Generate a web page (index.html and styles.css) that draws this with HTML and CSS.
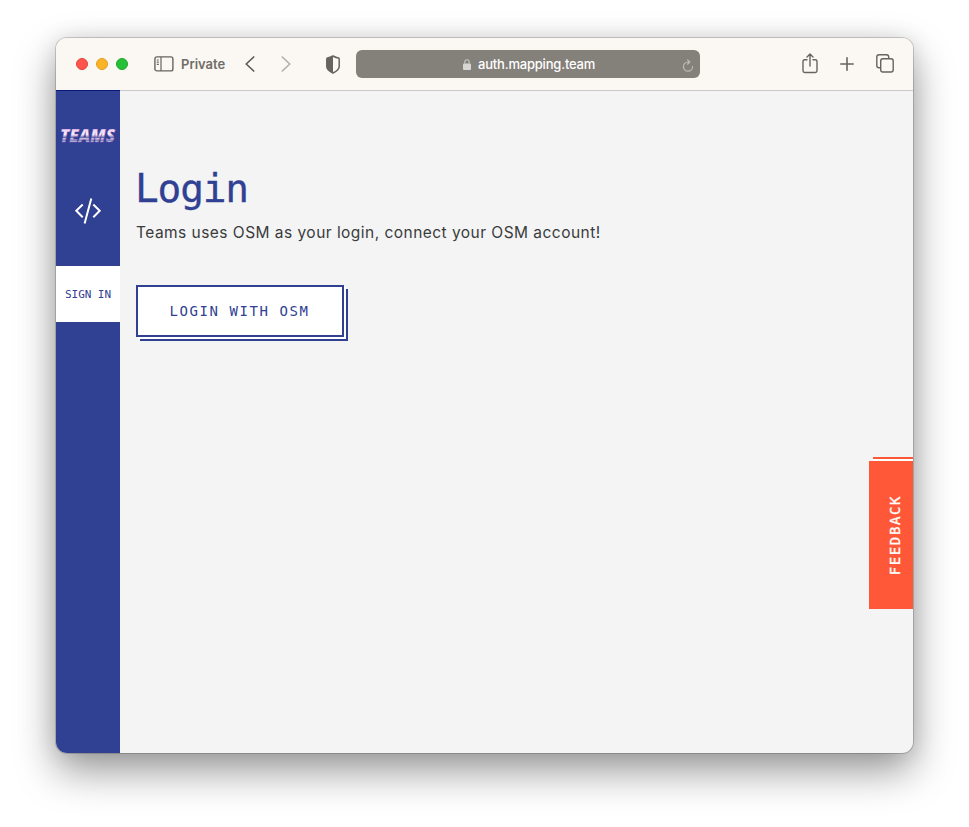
FILE: index.html
```html
<!DOCTYPE html>
<html lang="en">
<head>
<meta charset="utf-8">
<title>Teams – Login</title>
<link rel="stylesheet" href="styles.css">
</head>
<body>
<div class="window">
  <header class="toolbar">
    <div class="lights"><i class="red"></i><i class="yellow"></i><i class="green"></i></div>
    <svg class="panel-icon" width="20" height="16" viewBox="0 0 20 16" fill="none" stroke="#67645f" stroke-width="1.4"><rect x=".9" y=".9" width="18" height="14" rx="2"/><path d="M7 1v14M2.8 4h2M2.8 6.2h2M2.8 8.4h2" stroke-width="1.2"/></svg>
    <span class="private">Private</span>
    <svg class="back" width="10" height="16" viewBox="0 0 10 16" fill="none" stroke="#5e5b57" stroke-width="1.7" stroke-linecap="round" stroke-linejoin="round"><path d="M8.7 1 1.2 8l7.5 7"/></svg>
    <svg class="forward" width="10" height="16" viewBox="0 0 10 16" fill="none" stroke="#b4b1ac" stroke-width="1.7" stroke-linecap="round" stroke-linejoin="round"><path d="m1.3 1 7.5 7-7.5 7"/></svg>
    <svg class="shield" width="14" height="19" viewBox="0 0 14 19"><path d="M7 1Q10 2.8 12.5 3.1 13.2 3.2 13.2 4V11.5C13.2 15 9.5 16.8 7 18 4.500 16.800.8 15 .8 11.500V4Q.8 3.200 1.500 3.100 4 2.800 7 1Z" fill="none" stroke="#67645f" stroke-width="1.5"/><path d="M7 1V18C4.500 16.800.8 15 .8 11.500V4Q.8 3.200 1.500 3.100 4 2.800 7 1Z" fill="#67645f"/></svg>
    <div class="address">
      <svg class="lock" width="8" height="11" viewBox="0 0 8 11"><rect y="4.500" width="8" height="6.500" rx="1" fill="#d9d7d4"/><path d="M1.800 5V3a2.200 2.200 0 0 1 4.400 0v2" fill="none" stroke="#c9c7c3" stroke-width="1.100"/></svg>
      <span>auth.mapping.team</span>
      <svg class="reload" width="12" height="13" viewBox="0 0 12 13" fill="none" stroke="#bdbab6" stroke-width="1.200" stroke-linecap="round" stroke-linejoin="round"><path d="M7.500 3H6A4.600 4.600 0 1 0 10.600 7.600M5.500.9l2.300 2.100-2.300 2.200"/></svg>
    </div>
    <svg class="share" width="16" height="21" viewBox="0 0 16 21" fill="none" stroke="#67645f" stroke-width="1.400" stroke-linecap="round" stroke-linejoin="round"><path d="M5 6.800H2.700Q1 6.800 1 8.500v9.300q0 1.700 1.700 1.700h10.600q1.700 0 1.700-1.700V8.500q0-1.700-1.700-1.700H11M8 13V1.200M5 4l3-3 3 3"/></svg>
    <svg class="plus" width="14" height="14" viewBox="0 0 14 14" stroke="#67645f" stroke-width="1.600" stroke-linecap="round"><path d="M7 .8v12.400M.8 7h12.400"/></svg>
    <svg class="tabs" width="18" height="19" viewBox="0 0 18 19" fill="none" stroke="#67645f" stroke-width="1.400"><path d="M4.500 13.700H3q-2.200 0-2.200-2.200V3Q.8.800 3 .800h7.500q2.200 0 2.200 2.200v1.700"/><rect x="4.700" y="4.800" width="12.500" height="13.200" rx="2.200"/></svg>
  </header>
  <div class="content">
    <nav class="sidebar">
      <div class="logo">
        <svg width="60" height="24" viewBox="0 0 60 24">
          <defs><linearGradient id="chrome" x1="0" y1="0" x2="0" y2="1"><stop offset=".2" stop-color="#e6cdec"/><stop offset=".45" stop-color="#f8f0fb"/><stop offset=".55" stop-color="#a9a1ca"/><stop offset=".68" stop-color="#d9c9e5"/><stop offset=".8" stop-color="#8f9fc8"/></linearGradient></defs>
          <text x="2" y="18" class="logo-text" textLength="55" lengthAdjust="spacingAndGlyphs">TEAMS</text>
          <path d="M0 13.300h60M0 16.100h60" stroke="#304194" stroke-width=".7"/>
        </svg>
      </div>
      <svg class="code" width="28" height="28" viewBox="0 0 28 28" fill="none" stroke="#fff" stroke-width="2"><path d="M8.700 7.500 2.300 13.800l6.400 6.400M19.300 7.500l6.400 6.300-6.400 6.400M17.300 1.500 10.600 26.500"/></svg>
      <a class="signin">SIGN IN</a>
    </nav>
    <main>
      <h1>Login</h1>
      <p>Teams uses OSM as your login, connect your OSM account!</p>
      <button class="login">LOGIN WITH OSM</button>
    </main>
    <button class="feedback"><span>FEEDBACK</span></button>
  </div>
</div>
</body>
</html>
```
FILE: styles.css
```css
* { box-sizing: border-box; }
body {
  margin: 0;
  height: 827px;
  padding: 38px 56px;
  overflow: hidden;
  background: #fff;
  font-family: Inter, sans-serif;
}
.window {
  width: 857px;
  height: 715px;
  display: flex;
  flex-direction: column;
  overflow: hidden;
  border-radius: 11px;
  background: #f4f4f4;
  box-shadow: 0 0 0 1px rgba(0,0,0,.17), 0 18px 40px rgba(0,0,0,.4), 0 0 22px rgba(0,0,0,.1);
}
.toolbar {
  height: 53px;
  flex: none;
  display: flex;
  align-items: center;
  padding-left: 20px;
  background: #fbf7f2;
  border-bottom: 1px solid #c9c9c8;
}
.toolbar svg { flex: none; }
.lights { display: flex; gap: 8px; }
.lights i { width: 12px; height: 12px; border-radius: 50%; border: 1px solid #e1443e; background: #ff554e; }
.lights .yellow { border-color: #e29e25; background: #fdb327; }
.lights .green { border-color: #1da72d; background: #24c138; }
.panel-icon { margin-left: 26px; }
.private { width: 45px; margin-left: 7px; font-size: 13px; font-weight: 600; letter-spacing: 0; color: #706d69; }
.back { margin-left: 19px; }
.forward { margin-left: 26px; }
.shield { margin-left: 35px; }
.address {
  width: 344px;
  height: 28px;
  margin-left: 16px;
  display: flex;
  align-items: center;
  border-radius: 6px;
  background: #84807a;
  color: #fff;
  font-size: 13px;
  font-weight: 500;
}
.address span { width: 118px; margin-left: 7px; letter-spacing: -.2px; white-space: nowrap; }
.lock { margin-left: 107px; }
.reload { margin-left: 86px; margin-top: 2px; }
.share { margin-left: 102px; margin-top: -2px; }
.plus { margin-left: 22px; }
.tabs { margin-left: 22px; margin-top: -1px; }
.content { flex: 1; display: flex; }
.sidebar {
  width: 64px;
  margin-top: -1px;
  display: flex;
  flex-direction: column;
  align-items: center;
  background: #304194;
  border-top: 1px solid #07187a;
}
.logo { height: 24px; margin-top: 33px; }
.logo svg { display: block; }
.logo-text { font: italic 800 17px "Open Sans", sans-serif; fill: url(#chrome); stroke: #b45cc4; stroke-width: .25px; }
.code { margin-top: 49px; }
.signin {
  width: 64px;
  height: 56px;
  margin-top: 41px;
  display: flex;
  align-items: center;
  justify-content: center;
  background: #fff;
  color: #304194;
  font: 11px "DejaVu Sans Mono", monospace;
  letter-spacing: -.05px;
}
main { flex: 1; padding: 71px 0 0 16px; }
h1 {
  margin: 0 0 0 -1px;
  height: 52px;
  color: #304194;
  font: 400 39.500px/52px "DejaVu Sans Mono", monospace;
  letter-spacing: -1.200px;
  -webkit-text-stroke: .3px #304194;
}
p {
  margin: 7px 0 0;
  color: #393b3d;
  font-size: 15.500px;
  line-height: 24px;
  letter-spacing: .465px;
}
.login {
  display: block;
  width: 208px;
  height: 52px;
  margin-top: 40px;
  padding: 0 1px 0 0;
  border: 2px solid #304194;
  border-radius: 0;
  background: #fff;
  box-shadow: 2px 2px 0 #fff, 4px 4px 0 #304194;
  color: #304194;
  font: 14px "DejaVu Sans Mono", monospace;
  letter-spacing: 1.570px;
}
.feedback {
  width: 44px;
  height: 148px;
  margin-top: 370px;
  padding: 0 0 0 8px;
  display: flex;
  align-items: center;
  justify-content: center;
  border: 0;
  background: #ff5838;
  box-shadow: 4px -2px 0 #fff, 4px -4px 0 #ff5838;
  color: #fff;
  font: 14px "DejaVu Sans Mono", monospace;
  letter-spacing: 1.600px;
  -webkit-text-stroke: .3px #fff;
}
.feedback span { writing-mode: vertical-rl; transform: rotate(180deg); }
```
